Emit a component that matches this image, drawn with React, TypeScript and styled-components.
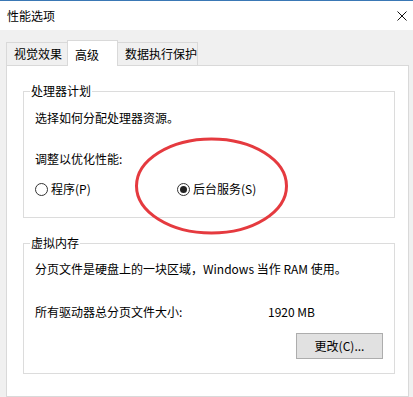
import React from "react";
import styled, { createGlobalStyle } from "styled-components";

const Global = createGlobalStyle`
  html, body { margin: 0; padding: 0; background: #f0f0f0; }
  body {
    font-family: "Noto Sans CJK SC", "Noto Sans", sans-serif;
    font-size: 12px;
    color: #000;
  }
`;

const Window = styled.div`
  position: relative;
  width: 413px;
  height: 397px;
  overflow: hidden;
  background: #f0f0f0;
  display: flex;
  flex-direction: column;
`;

const TitleBar = styled.div`
  height: 29px;
  border-top: 1px solid #3a78b5;
  background: #fff;
  display: flex;
  align-items: center;
  justify-content: space-between;
  padding: 0 5px 0 7px;
  font-size: 12px;
  line-height: 16px;
`;

const CloseBtn = styled.div`
  width: 10px;
  height: 10px;
  margin-right: 1px;
  display: flex;
`;

const TabStrip = styled.div`
  position: relative;
  z-index: 1;
  display: flex;
  align-items: flex-end;
  margin: 10px 0 -1px 6px;
`;

const Tab = styled.div<{ $active?: boolean; $w: number }>`
  box-sizing: border-box;
  width: ${(p) => p.$w}px;
  height: ${(p) => (p.$active ? 26 : 24)}px;
  margin-left: -1px;
  padding: ${(p) => (p.$active ? "2px 0 0 7px" : "0 0 0 7px")};
  border: 1px solid #d9d9d9;
  border-bottom: ${(p) => (p.$active ? "none" : "1px solid #d9d9d9")};
  background: ${(p) => (p.$active ? "#fff" : "#f0f0f0")};
  display: flex;
  align-items: center;
  line-height: 16px;
  &:first-child { margin-left: 0; }
`;

const Panel = styled.div`
  box-sizing: border-box;
  width: 403px;
  flex: 1;
  margin-left: 6px;
  border: 1px solid #d9d9d9;
  background: #fff;
  padding: 17px 13px 0 16px;
`;

const Group = styled.fieldset<{ $top: number; $pt: number }>`
  margin: ${(p) => p.$top}px 0 0 0;
  padding: ${(p) => p.$pt}px 11px 0 11px;
  border: 1px solid #dcdcdc;
  min-inline-size: 0;
`;

const Legend = styled.legend`
  padding: 0 1px;
  margin-left: -5px;
  line-height: 16px;
  font-size: 12px;
`;

const Line = styled.div<{ $mt?: number }>`
  line-height: 16px;
  margin-top: ${(p) => p.$mt ?? 0}px;
  white-space: nowrap;
`;

const RadioRow = styled.div`
  display: flex;
  align-items: center;
  height: 16px;
  margin-top: 14px;
  padding-bottom: 20px;
`;

const RadioItem = styled.label<{ $w?: number }>`
  display: flex;
  align-items: center;
  gap: 3px;
  width: ${(p) => (p.$w ? `${p.$w}px` : "auto")};
  line-height: 16px;
`;

const RadioCircle = styled.span<{ $on?: boolean }>`
  position: relative;
  box-sizing: border-box;
  width: 13px;
  height: 13px;
  border: 1px solid #333;
  border-radius: 50%;
  background: #fff;
  &::after {
    content: "";
    display: ${(p) => (p.$on ? "block" : "none")};
    position: absolute;
    left: 2px;
    top: 2px;
    width: 7px;
    height: 7px;
    border-radius: 50%;
    background: #222;
  }
`;

const SizeRow = styled.div`
  display: grid;
  grid-template-columns: 233px auto;
  line-height: 16px;
  margin-top: 27px;
`;

const ButtonRow = styled.div`
  display: flex;
  justify-content: flex-end;
  margin-top: 13px;
  padding-bottom: 14px;
`;

const Button = styled.div`
  box-sizing: border-box;
  width: 87px;
  height: 26px;
  border: 1px solid #adadad;
  background: #e1e1e1;
  display: flex;
  align-items: center;
  justify-content: center;
  line-height: 16px;
`;

const Annotation = styled.svg`
  position: absolute;
  left: 0;
  top: 0;
  pointer-events: none;
`;

export default function App() {
  return (
    <>
      <Global />
      <Window>
        <TitleBar>
          <span>性能选项</span>
          <CloseBtn>
            <svg width="10" height="10" viewBox="0 0 10 10">
              <path d="M0.5 0.5 L9.5 9.5 M9.5 0.5 L0.5 9.5" stroke="#111" strokeWidth="1" />
            </svg>
          </CloseBtn>
        </TitleBar>
        <TabStrip>
          <Tab $w={62}>视觉效果</Tab>
          <Tab $w={51} $active>高级</Tab>
          <Tab $w={81}>数据执行保护</Tab>
        </TabStrip>
        <Panel>
          <Group $top={0} $pt={11}>
            <Legend>处理器计划</Legend>
            <Line>选择如何分配处理器资源。</Line>
            <Line $mt={25}>调整以优化性能:</Line>
            <RadioRow>
              <RadioItem $w={142}>
                <RadioCircle />
                程序(P)
              </RadioItem>
              <RadioItem>
                <RadioCircle $on />
                后台服务(S)
              </RadioItem>
            </RadioRow>
          </Group>
          <Group $top={17} $pt={10}>
            <Legend>虚拟内存</Legend>
            <Line>分页文件是硬盘上的一块区域，Windows 当作 RAM 使用。</Line>
            <SizeRow>
              <span>所有驱动器总分页文件大小:</span>
              <span>1920 MB</span>
            </SizeRow>
            <ButtonRow>
              <Button>更改(C)...</Button>
            </ButtonRow>
          </Group>
        </Panel>
        <Annotation width="413" height="397" viewBox="0 0 413 397">
          <ellipse cx="211.5" cy="186" rx="75" ry="47" fill="none" stroke="#e53a3f" strokeWidth="3" />
        </Annotation>
      </Window>
    </>
  );
}
